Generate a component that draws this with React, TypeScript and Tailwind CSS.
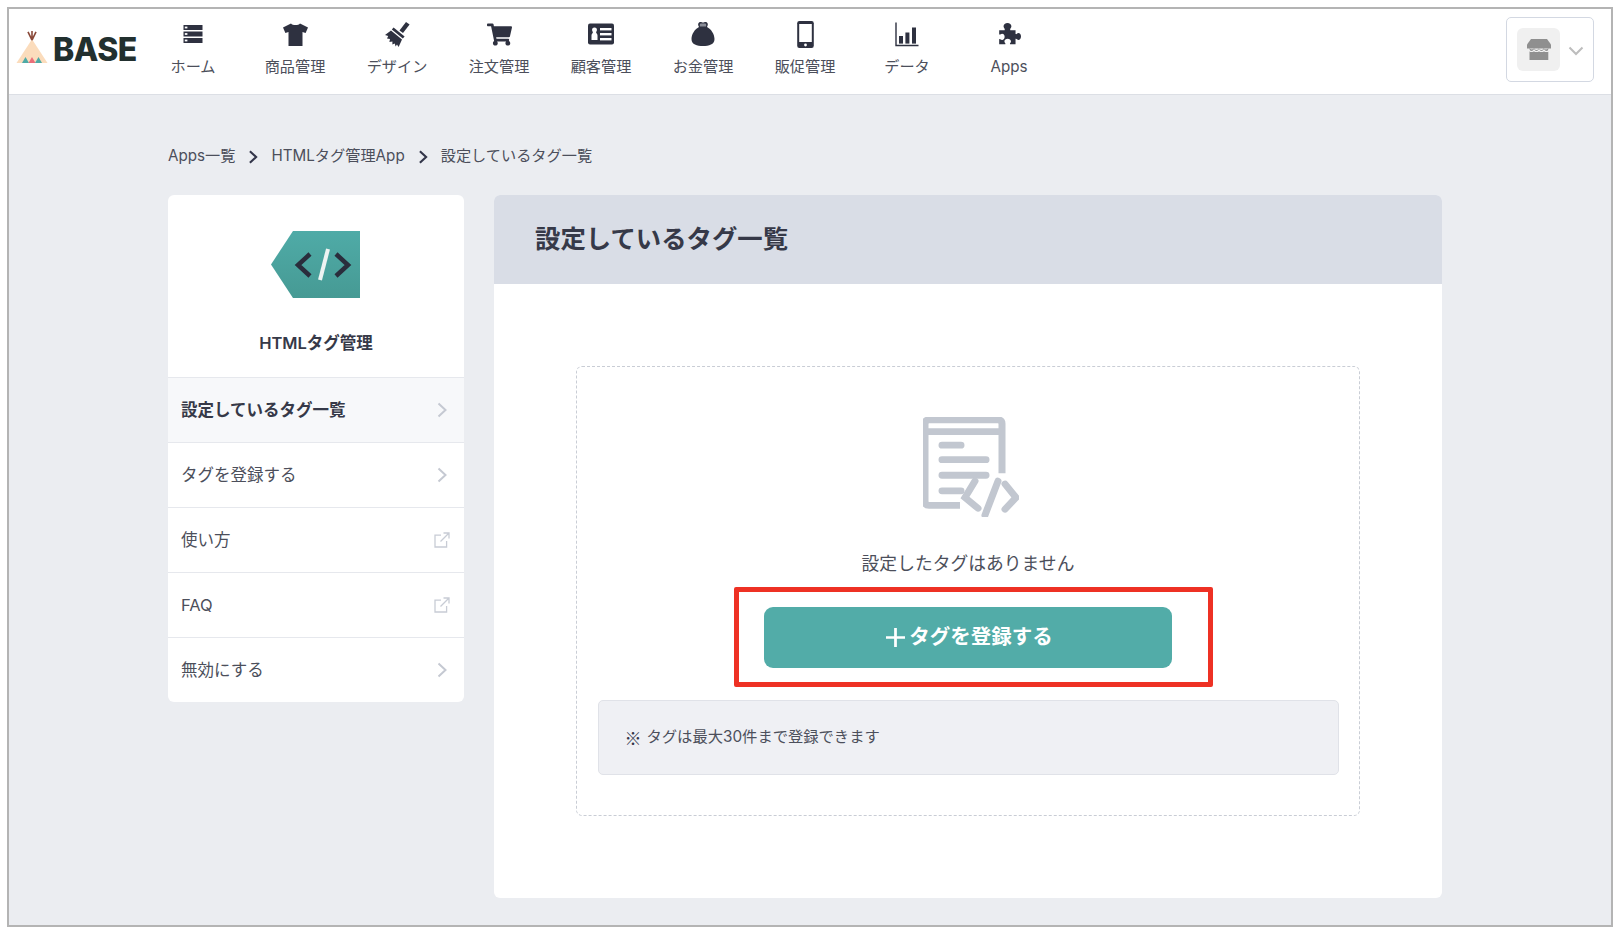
import React from "react";
import { FaShoppingCart } from "react-icons/fa";

const C = "#2e3140";

const HomeIcon = () => (
  <svg width="20" height="20" viewBox="0 0 20 20">
    {[1, 7.5, 14].map((y) => (
      <g key={y}>
        <rect x="0.5" y={y} width="19" height="5" fill={C} />
        <rect x="1.8" y={y + 1.6} width="2.6" height="1.8" fill="#fff" />
      </g>
    ))}
  </svg>
);
const ShirtIcon = () => (
  <svg width="25" height="23" viewBox="0 0 25 23">
    <path d="M8 0.5 C9.5 2.6 15.5 2.6 17 0.5 L25 4.5 L22.6 10 L19.5 9 V23 H5.5 V9 L2.4 10 L0 4.5 Z" fill={C} />
  </svg>
);
const BrushIcon = () => (
  <svg width="26" height="27" viewBox="0 0 26 27">
    <path d="M15.5 9.5 L22 1 L25.6 3.6 L19 12 Z" fill={C} />
    <path d="M9.6 6.4 L20.6 15.4 L18.8 17.6 L7.8 8.4 Z" fill={C} />
    <path d="M7 9.4 L18 18.6 L14.6 26 L13 23.6 L11.6 25.4 L10.8 22.4 L8.4 23.6 L8.4 20.6 L5.4 21 L6 18 L3 17.6 L4.2 15 L1 14 Z" fill={C} />
  </svg>
);
const IdIcon = () => (
  <svg width="26" height="22" viewBox="0 0 26 22">
    <rect x="0" y="0.5" width="26" height="21" rx="2" fill={C} />
    <path d="M6.5 4.5 a2.4 2.4 0 0 1 2.4 2.6 c0 1 -0.6 1.7 -0.8 2.4 c0.4 1 1.4 1.2 1.4 3 v4.5 h-6 v-4.5 c0 -1.8 1 -2 1.4 -3 c-0.2 -0.7 -0.8 -1.4 -0.8 -2.4 a2.4 2.4 0 0 1 2.4 -2.6 Z" fill="#fff" />
    <rect x="12" y="5" width="11.5" height="2.4" fill="#fff" />
    <rect x="12" y="10" width="11.5" height="2.4" fill="#fff" />
    <rect x="12" y="15" width="11.5" height="2.4" fill="#fff" />
  </svg>
);
const PurseIcon = () => (
  <svg width="24" height="26" viewBox="0 0 24 26">
    <path d="M8 6 C6 2.5 8 1 9.5 1 C10.5 1 11 1.6 12 1.6 C13 1.6 13.5 1 14.5 1 C16 1 18 2.5 16 6 C20 8 23.5 13 23.5 18 C23.5 23.5 18 25 12 25 C6 25 0.5 23.5 0.5 18 C0.5 13 4 8 8 6 Z" fill={C} />
    <path d="M9 5.5 C8.4 3.4 9 2.4 10 2.6 L14 2.6 C15 2.4 15.6 3.4 15 5.5 Z" fill="#8a8d97" />
  </svg>
);
const PhoneIcon = () => (
  <svg width="17" height="27" viewBox="0 0 17 27">
    <rect x="0.2" y="0" width="16.6" height="27" rx="2.2" fill={C} />
    <rect x="2.2" y="3" width="12.6" height="18" fill="#fff" />
    <circle cx="8.5" cy="24" r="1.4" fill="#fff" />
  </svg>
);
const ChartIcon = () => (
  <svg width="24" height="25" viewBox="0 0 24 25">
    <path d="M1 0.5 V23.5 H23.5" fill="none" stroke={C} strokeWidth="1.4" />
    <rect x="4" y="14" width="4" height="7.6" fill={C} />
    <rect x="10.4" y="10.5" width="4" height="11.1" fill={C} />
    <rect x="17" y="5.5" width="4" height="16.1" fill={C} />
  </svg>
);
const PuzzleIcon = () => (
  <svg width="24" height="24" viewBox="0 0 22 20">
    <path d="M2 6.5 H7 C7.6 5.2 6 4.6 6 3 C6 1.2 7.6 0 9.6 0 C11.6 0 13.2 1.2 13.2 3 C13.2 4.6 11.6 5.2 12.2 6.5 H17 V10 C18 10.6 18.4 9 19.6 9 C21 9 22 10.4 22 12.2 C22 14 21 15.4 19.6 15.4 C18.4 15.4 18 13.8 17 14.4 V19.5 H12 C11.4 18.4 12.8 18 12.8 16.8 C12.8 15.4 11.4 14.4 9.8 14.4 C8.2 14.4 6.8 15.4 6.8 16.8 C6.8 18 8.2 18.4 7.6 19.5 H2 V14.8 C3 14.2 3.4 15.6 4.6 15.6 C6 15.6 7 14.2 7 12.6 C7 11 6 9.8 4.6 9.8 C3.4 9.8 3 11 2 10.4 Z" fill={C} />
  </svg>
);
const StoreIcon = () => (
  <svg width="24" height="21" viewBox="0 0 24 21">
    <path d="M4 0 H20 L24 5.5 V9.5 H0 V5.5 Z" fill="#8f8f8f" />
    <path d="M2.5 9 a2.4 2 0 0 0 4.6 0 a2.4 2 0 0 0 4.8 0 a2.4 2 0 0 0 4.8 0 a2.4 2 0 0 0 4.6 0 V21 H2.5 Z" fill="#8f8f8f" />
    <path d="M2 10.5 a2.5 2 0 0 0 5 0 a2.5 2 0 0 0 5 0 a2.5 2 0 0 0 5 0 a2.5 2 0 0 0 5 0" fill="none" stroke="#f0f0f0" strokeWidth="1.2" />
  </svg>
);

const Teepee = () => (
  <svg width="32" height="34" viewBox="0 0 32 37" preserveAspectRatio="none" className="mb-[6px] shrink-0">
    <path d="M16 10 L31.5 36 H0.5 Z" fill="#fbdcbc" />
    <path d="M16 11 L12 2 M16 11 L16 1 M16 11 L20 2" stroke="#8a4a3a" strokeWidth="1.6" />
    <path d="M6 36 L9.5 29.5 L13 36 Z" fill="#4eaaa6" />
    <path d="M12.5 36 L16 29.5 L19.5 36 Z" fill="#ea6f7a" />
    <path d="M19 36 L22.5 29.5 L26 36 Z" fill="#4eaaa6" />
  </svg>
);

const Chev = ({ color = "#c5c9d2", w = 2, size = 18 }: { color?: string; w?: number; size?: number }) => (
  <svg width={size} height={size} viewBox="0 0 18 18" fill="none">
    <path d="M5.5 2.5 L12.5 9 L5.5 15.5" stroke={color} strokeWidth={w} />
  </svg>
);
const Ext = () => (
  <svg width="16" height="16" viewBox="0 0 16 16" fill="none" stroke="#c8ccd5" strokeWidth="1.3">
    <path d="M7 3.2 H1 V15 H12.6 V9" />
    <path d="M6.5 9.5 L14.5 1.5 M9.5 1 H15 V6.5" />
  </svg>
);

const nav: [string, React.ReactNode][] = [
  ["ホーム", <HomeIcon />],
  ["商品管理", <ShirtIcon />],
  ["デザイン", <BrushIcon />],
  ["注文管理", <FaShoppingCart size={25} color={C} />],
  ["顧客管理", <IdIcon />],
  ["お金管理", <PurseIcon />],
  ["販促管理", <PhoneIcon />],
  ["データ", <ChartIcon />],
  ["Apps", <PuzzleIcon />],
];

const menu: [string, "chev" | "ext", boolean][] = [
  ["設定しているタグ一覧", "chev", true],
  ["タグを登録する", "chev", false],
  ["使い方", "ext", false],
  ["FAQ", "ext", false],
  ["無効にする", "chev", false],
];

export default function App() {
  return (
    <div className="h-[938px] w-[1624px] overflow-hidden bg-white pl-[7px] pt-[7px] font-['Inter','Noto_Sans_CJK_JP',sans-serif] text-[#4c4f5b]">
      <div className="flex h-[920px] w-[1606px] flex-col border-2 border-[#b4b4b4] bg-[#ebedf1]">
        <header className="flex h-[86px] shrink-0 items-center border-b border-[#dcdfe5] bg-white pr-[17px]">
          <div className="mb-[3px] flex w-[133px] shrink-0 items-center gap-[5px] pl-[7px]">
            <Teepee />
            <span className="text-[32px] leading-none font-extrabold tracking-[-0.5px] text-[#22302f]">BASE</span>
          </div>
          <nav className="flex h-full">
            {nav.map(([label, icon]) => (
              <div key={label} className="flex w-[102px] flex-col items-center">
                <div className="mt-[11px] flex h-[28px] items-center justify-center">{icon}</div>
                <span className="mt-[8px] text-[15.2px] leading-[22px] whitespace-nowrap">{label}</span>
              </div>
            ))}
          </nav>
          <div className="mb-[5px] ml-auto flex h-[65px] w-[88px] items-center gap-[8px] rounded-[5px] border border-[#d3d8e2] bg-white pl-[10px]">
            <div className="flex h-[43px] w-[43px] items-center justify-center rounded-[6px] bg-[#f0f0f0]">
              <StoreIcon />
            </div>
            <svg width="16" height="10" viewBox="0 0 16 10" fill="none" className="mt-[3px]">
              <path d="M1.5 1.5 L8 8 L14.5 1.5" stroke="#bdbdbd" strokeWidth="2" />
            </svg>
          </div>
        </header>

        <div className="flex flex-col pl-[159px]">
          <div className="flex h-[100px] items-center pt-[23px] text-[15.2px] whitespace-nowrap">
            <span>Apps一覧</span>
            <span className="mx-[10px]"><Chev color="#33364a" w={2.4} size={16} /></span>
            <span>HTMLタグ管理App</span>
            <span className="mx-[10px]"><Chev color="#33364a" w={2.4} size={16} /></span>
            <span>設定しているタグ一覧</span>
          </div>

          <div className="flex items-start gap-[30px]">
            <aside className="w-[296px] shrink-0 overflow-hidden rounded-[6px] bg-white">
              <div className="flex h-[182px] flex-col items-center pt-[36px]">
                <svg width="89" height="67" viewBox="0 0 89 67" className="mr-[2px] shrink-0">
                  <defs>
                    <linearGradient id="tg" x1="0" y1="0" x2="0" y2="1">
                      <stop offset="0" stopColor="#4fabA7" />
                      <stop offset="1" stopColor="#469a94" />
                    </linearGradient>
                  </defs>
                  <path d="M22 0 H89 V67 H22 L0 33.5 Z" fill="url(#tg)" />
                  <path d="M39 23 L27 34 L39 45 M65 23 L77 34 L65 45" fill="none" stroke="#2a2d3c" strokeWidth="4.5" />
                  <path d="M57 18 L49 49" stroke="#eef3f2" strokeWidth="4" />
                </svg>
                <div className="mt-[33px] text-[16.5px] leading-[24px] font-semibold text-[#363948]">HTMLタグ管理</div>
              </div>
              {menu.map(([t, kind, active]) => (
                <div
                  key={t}
                  className={
                    active
                      ? "flex h-[65px] items-center justify-between border-t border-[#e6e8ed] bg-[#f7f8fa] pr-[13px] pl-[13px] text-[16.5px] font-bold text-[#363948]"
                      : "flex h-[65px] items-center justify-between border-t border-[#e6e8ed] pr-[13px] pl-[13px] text-[16.5px]"
                  }
                >
                  <span>{t}</span>
                  {kind === "chev" ? <Chev /> : <span className="pr-[1px]"><Ext /></span>}
                </div>
              ))}
            </aside>

            <main className="h-[703px] w-[948px] shrink-0 overflow-hidden rounded-[6px] bg-white">
              <div className="flex h-[89px] items-center bg-[#d9dde6] pl-[41px] text-[25.4px] font-bold text-[#363948]">
                設定しているタグ一覧
              </div>
              <div className="mx-[82px] mt-[82px] flex h-[450px] flex-col items-center rounded-[6px] border border-dashed border-[#c9cdd5] pt-[50px]">
                <svg width="96" height="100" viewBox="0 0 96 103" fill="none" preserveAspectRatio="none" className="ml-[6px] shrink-0">
                  <path d="M79 58 V7 Q79 3 75 3 H6 Q2 3 2 7 V87 Q2 91 6 91 H37" stroke="#c2c7d0" strokeWidth="7" />
                  <path d="M2 15 H79" stroke="#c2c7d0" strokeWidth="7" />
                  <path d="M19 29 H38 M19 44 H63 M19 60 H63 M19 76 H38" stroke="#c2c7d0" strokeWidth="7" strokeLinecap="round" />
                  <path d="M52 66 L42 83 L55 94" stroke="#c2c7d0" strokeWidth="7" strokeLinecap="round" />
                  <path d="M82 69 L93 83 L82 95" stroke="#c2c7d0" strokeWidth="7" strokeLinecap="round" />
                  <path d="M75 66 L62 101" stroke="#c2c7d0" strokeWidth="7" strokeLinecap="round" />
                </svg>
                <div className="mt-[34px] text-[17.8px] leading-[26px]">設定したタグはありません</div>
                <div className="mt-[10px] ml-[10px] flex h-[100px] w-[479px] shrink-0 items-start rounded-[2px] border-[5px] border-[#ee3124] bg-white pt-[15px] pl-[25px]">
                  <div className="flex h-[61px] w-[408px] items-center justify-center gap-[4px] rounded-[9px] bg-[#52aca8] pl-[4px] text-[20.5px] font-semibold text-white">
                    <svg width="19" height="19" viewBox="0 0 18 18"><path d="M9 0 V18 M0 9 H18" stroke="#fff" strokeWidth="2.6" /></svg>
                    <span>タグを登録する</span>
                  </div>
                </div>
                <div className="mt-[13px] flex h-[75px] w-[741px] shrink-0 items-center rounded-[5px] border border-[#e0e2e8] bg-[#eff0f4] pl-[26px] text-[15.3px]">
                  <span className="font-['Noto_Sans_CJK_JP',sans-serif] text-[17px] font-medium text-[#33364a]">※</span>
                  <span className="ml-[5px]">タグは最大30件まで登録できます</span>
                </div>
              </div>
            </main>
          </div>
        </div>
      </div>
    </div>
  );
}
